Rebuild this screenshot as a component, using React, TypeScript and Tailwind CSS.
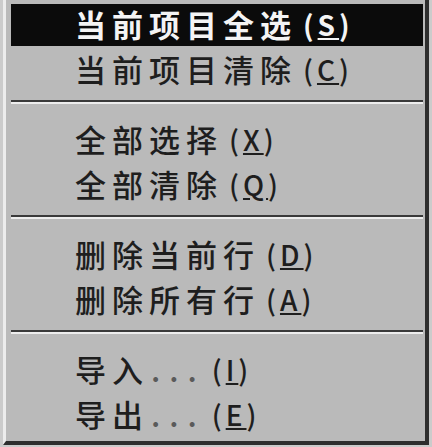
type MenuItem = {
    label: string;
    key: string;
    dots?: boolean;
    active?: boolean;
};

const groups: MenuItem[][] = [
    [
        { label: "当前项目全选", key: "S", active: true },
        { label: "当前项目清除", key: "C" },
    ],
    [
        { label: "全部选择", key: "X" },
        { label: "全部清除", key: "Q" },
    ],
    [
        { label: "删除当前行", key: "D" },
        { label: "删除所有行", key: "A" },
    ],
    [
        { label: "导入", key: "I", dots: true },
        { label: "导出", key: "E", dots: true },
    ],
];

function Row({ item, first }: { item: MenuItem; first: boolean }) {
    return (
        <div
            className={`flex items-center pl-[64px] ${first ? "h-[42px] pb-[3px] font-bold" : "h-[45px] font-medium"} ${
                item.active ? "bg-[#0b0b0b] text-[#f4f4f4]" : "text-[#1e1e1e]"
            }`}
        >
            <span className="tracking-[6px]">{item.label}</span>
            {item.dots && <span className="ml-[2px] tracking-[9px] text-[#5a5a5a]">...</span>}
            <span className="ml-[6px] tracking-[4px] text-[28px]">
                (<span className="underline underline-offset-2">{item.key}</span>)
            </span>
        </div>
    );
}

export default function App() {
    return (
        <div
            className="w-[432px] h-[447px] bg-[#cbcbcb] pl-[3px]"
            style={{ fontFamily: '"Noto Sans CJK SC", "Noto Sans", sans-serif' }}
        >
            <div className="w-[426px] h-[445px] bg-[#bababa] border-l-[3px] border-l-[#ececec] border-r-[4px] border-r-[#2e2e2e] border-b-[4px] border-b-[#2e2e2e] pl-[5px] pr-[2px] pt-[4px] text-[31px] leading-none">
                {groups.map((group, gi) => (
                    <div key={gi}>
                        {gi > 0 && (
                            <div className="h-[25px] pt-[9px]">
                                <div className="h-[2px] bg-[#3a3a3a]" />
                                <div className="h-[2px] bg-[#ededed]" />
                            </div>
                        )}
                        {group.map((item, ii) => (
                            <Row key={item.key} item={item} first={gi === 0 && ii === 0} />
                        ))}
                    </div>
                ))}
            </div>
        </div>
    );
}
